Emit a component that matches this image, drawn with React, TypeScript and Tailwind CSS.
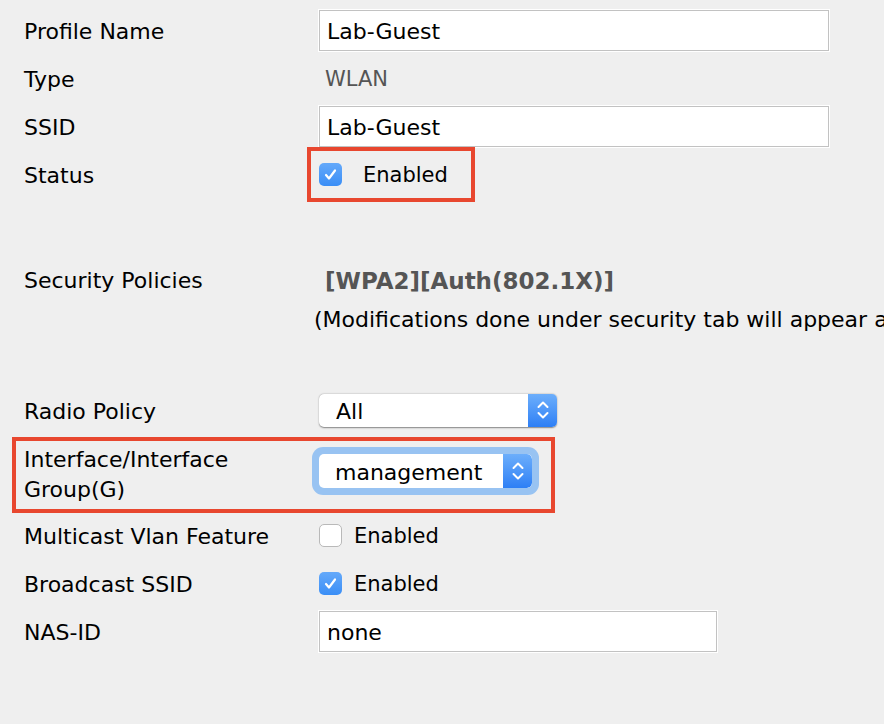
const FONT = { fontFamily: '"DejaVu Sans", Verdana, sans-serif' };

function Stepper({ className }: { className: string }) {
  return (
    <div className={"flex items-center justify-center bg-gradient-to-b from-[#6caefb] to-[#2d7ff5] " + className}>
      <svg width="14" height="22" viewBox="0 0 14 22" fill="none" stroke="white" strokeWidth="2" strokeLinecap="round" strokeLinejoin="round">
        <path d="M2.5 8 L7 3.5 L11.5 8" />
        <path d="M2.5 14 L7 18.5 L11.5 14" />
      </svg>
    </div>
  );
}

function Checkbox({ checked }: { checked: boolean }) {
  if (!checked) {
    return <div className="w-[23px] h-[23px] rounded-[5px] bg-white border border-[#b9b9b9] shrink-0" />;
  }
  return (
    <div className="w-[23px] h-[23px] rounded-[5px] bg-gradient-to-b from-[#64a9fa] to-[#3a8ef6] flex items-center justify-center shrink-0">
      <svg width="15" height="15" viewBox="0 0 15 15" fill="none" stroke="white" strokeWidth="2.2" strokeLinecap="round" strokeLinejoin="round">
        <path d="M3 8 L6 11.5 L12 3.5" />
      </svg>
    </div>
  );
}

function TextBox({ value, width }: { value: string; width: string }) {
  return (
    <div className={"h-[43px] border border-white " + width}>
      <div className="h-full border border-[#c2c2c2] bg-white flex items-center pl-[7px] pt-[2px] text-[22px] text-black">
        {value}
      </div>
    </div>
  );
}

function Row({ label, children, h = "h-[48px]" }: { label: React.ReactNode; children?: React.ReactNode; h?: string }) {
  return (
    <div className={"flex items-center relative " + h}>
      <div className="w-[295px] shrink-0 pt-[4px] text-[22px] leading-[30px] text-black">{label}</div>
      <div className="flex items-center flex-1">{children}</div>
    </div>
  );
}

export default function App() {
  return (
    <div style={FONT} className="w-[884px] h-[724px] bg-[#efefef] overflow-hidden pl-[24px] pt-[6px]">
      <Row label="Profile Name">
        <div className="-ml-[1px]"><TextBox value="Lab-Guest" width="w-[512px]" /></div>
      </Row>
      <Row label="Type">
        <span className="pl-[6px] pt-[4px] text-[21px] text-[#555555]">WLAN</span>
      </Row>
      <Row label="SSID">
        <div className="-ml-[1px]"><TextBox value="Lab-Guest" width="w-[512px]" /></div>
      </Row>
      <Row label="Status">
        <Checkbox checked />
        <span className="ml-[21px] pt-[4px] text-[21px] text-black">Enabled</span>
        <div className="absolute left-[283px] -top-[3px] w-[168px] h-[55px] border-4 border-[#e8472f]" />
      </Row>

      <div className="h-[57px]" />

      <Row label="Security Policies">
        <span className="pl-[6px] pt-[4px] text-[23px] font-bold text-[#555555]">[WPA2][Auth(802.1X)]</span>
      </Row>
      <div className="h-[28px] flex items-center pl-[290px] pt-[4px] text-[22px] text-black whitespace-nowrap">
        (Modifications done under security tab will appear after applying the changes.)
      </div>

      <div className="h-[55px]" />

      <Row label="Radio Policy">
        <div className="w-[238px] h-[33px] rounded-[5px] bg-white flex overflow-hidden shadow-[0_0.5px_1.5px_rgba(0,0,0,0.45)]">
          <div className="flex-1 flex items-center pl-[17px] pt-[2px] text-[22px] text-black">All</div>
          <Stepper className="w-[29px]" />
        </div>
      </Row>

      <Row h="h-[77px]" label={<><div>Interface/Interface</div><div>Group(G)</div></>}>
        <div className="-ml-[7px] -mt-[3px] p-[7px] rounded-[11px] bg-[#98c3f2]">
          <div className="w-[213px] h-[34px] rounded-[5px] bg-white flex overflow-hidden">
            <div className="flex-1 flex items-center pl-[16px] pt-[2px] text-[22px] text-black">management</div>
            <Stepper className="w-[29px] rounded-r-[5px]" />
          </div>
        </div>
        <div className="absolute -left-[12px] top-[3px] w-[543px] h-[76px] border-4 border-[#e8472f]" />
      </Row>

      <Row label="Multicast Vlan Feature">
        <Checkbox checked={false} />
        <span className="ml-[12px] pt-[4px] text-[21px] text-black">Enabled</span>
      </Row>
      <Row label="Broadcast SSID">
        <Checkbox checked />
        <span className="ml-[12px] pt-[4px] text-[21px] text-black">Enabled</span>
      </Row>
      <Row label="NAS-ID">
        <div className="-ml-[1px]"><TextBox value="none" width="w-[400px]" /></div>
      </Row>
    </div>
  );
}
